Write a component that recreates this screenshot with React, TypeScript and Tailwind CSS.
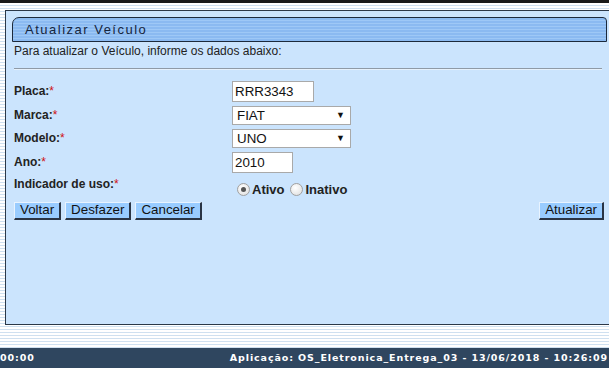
import React from "react";

const stripes =
  "bg-[repeating-linear-gradient(180deg,#ffffff_0px,#ffffff_2px,#cfe0f0_2px,#cfe0f0_3px)]";

function Label({ text }: { text: string }) {
  return (
    <div className="font-bold text-[12px] leading-[15px] text-[#222]">
      {text}
      <span className="text-[#d01010] font-normal">*</span>
    </div>
  );
}

function Select({ value }: { value: string }) {
  return (
    <div className="w-[119px] h-[19px] bg-white border border-[#a9a9a9] flex items-center justify-between pl-[4px] pr-[5px] text-[13.33px] text-[#111]">
      <span>{value}</span>
      <span className="text-[9px] leading-none">▼</span>
    </div>
  );
}

function Btn({ text }: { text: string }) {
  return (
    <div className="h-[18px] px-[5px] bg-[#99ccff] border-t border-l border-t-[#e8f3ff] border-l-[#e8f3ff] border-r-2 border-b-2 border-r-[#2a3444] border-b-[#2a3444] flex items-center text-[13.33px] text-[#111] leading-none">
      {text}
    </div>
  );
}

function Radio({ checked }: { checked?: boolean }) {
  return (
    <div className="w-[13px] h-[13px] rounded-full border border-[#a0a0a0] bg-[radial-gradient(circle_at_40%_35%,#ffffff,#dcdcdc)] flex items-center justify-center">
      {checked && <div className="w-[5px] h-[5px] rounded-full bg-[#555]" />}
    </div>
  );
}

export default function App() {
  return (
    <div
      className={`w-[609px] h-[368px] flex flex-col overflow-hidden ${stripes}`}
      style={{ fontFamily: "Arial, 'Liberation Sans', sans-serif" }}
    >
      <div className="h-[3px] bg-[#1a1a1a] shrink-0" />
      <div className="h-[7px] shrink-0" />
      <div className="flex h-[315px] shrink-0">
        <div className="w-[5px] shrink-0" />
        <div className="flex-1 bg-[#cbe4fd] border-l border-t border-b border-[#2b3848] flex flex-col">
          <div className="mt-[6px] ml-[6px] mr-[2px] h-[25px] rounded-tl-[7px] rounded-tr-[4px] border border-[#1c2a3c] bg-[repeating-linear-gradient(180deg,#8bbaf1_0px,#8bbaf1_2px,#9ec8f6_2px,#9ec8f6_3px)] flex items-center pl-[12px]">
            <span className="text-[13px] tracking-[1.5px] text-[#15253d]">Atualizar Veículo</span>
          </div>
          <div className="ml-[8px] mt-[1px] text-[12px] leading-[17px] text-[#222]">
            Para atualizar o Veículo, informe os dados abaixo:
          </div>
          <div className="ml-[8px] mr-[7px] mt-[8px] h-[2px] border-t border-t-[#8f9aa6] border-b border-b-[#e6f1fc]" />
          <div className="ml-[8px] mr-[5px] mt-[11px] grid grid-cols-[218px_1fr] gap-y-[4px] items-center">
            <Label text="Placa:" />
            <div className="w-[82px] h-[21px] bg-white border border-[#a9a9a9] flex items-center pl-[2px] text-[13.33px] text-[#111]">
              RRR3343
            </div>
            <Label text="Marca:" />
            <Select value="FIAT" />
            <Label text="Modelo:" />
            <Select value="UNO" />
            <Label text="Ano:" />
            <div className="w-[61px] h-[21px] bg-white border border-[#a9a9a9] flex items-center pl-[2px] text-[13.33px] text-[#111]">
              2010
            </div>
            <div className="self-start">
              <Label text="Indicador de uso:" />
            </div>
            <div className="mt-[3px] flex items-center pl-[5px] text-[13px] font-bold text-[#222]">
              <Radio checked />
              <span className="ml-[2px]">Ativo</span>
              <span className="ml-[5px]"><Radio /></span>
              <span className="ml-[3px]">Inativo</span>
            </div>
          </div>
          <div className="ml-[8px] mr-[5px] mt-[2px] flex items-center">
            <div className="flex gap-[4px]">
              <Btn text="Voltar" />
              <Btn text="Desfazer" />
              <Btn text="Cancelar" />
            </div>
            <div className="ml-auto">
              <Btn text="Atualizar" />
            </div>
          </div>
        </div>
      </div>
      <div className="h-[23px] shrink-0" />
      <div
        className="h-[20px] shrink-0 bg-[#2f465f] flex items-center justify-between text-white font-bold text-[9.5px] tracking-[0.9px] pr-[1px]"
        style={{ fontFamily: "Verdana, 'DejaVu Sans', sans-serif" }}
      >
        <span>00:00</span>
        <span>Aplicação: OS_Eletronica_Entrega_03 - 13/06/2018 - 10:26:09</span>
      </div>
    </div>
  );
}
